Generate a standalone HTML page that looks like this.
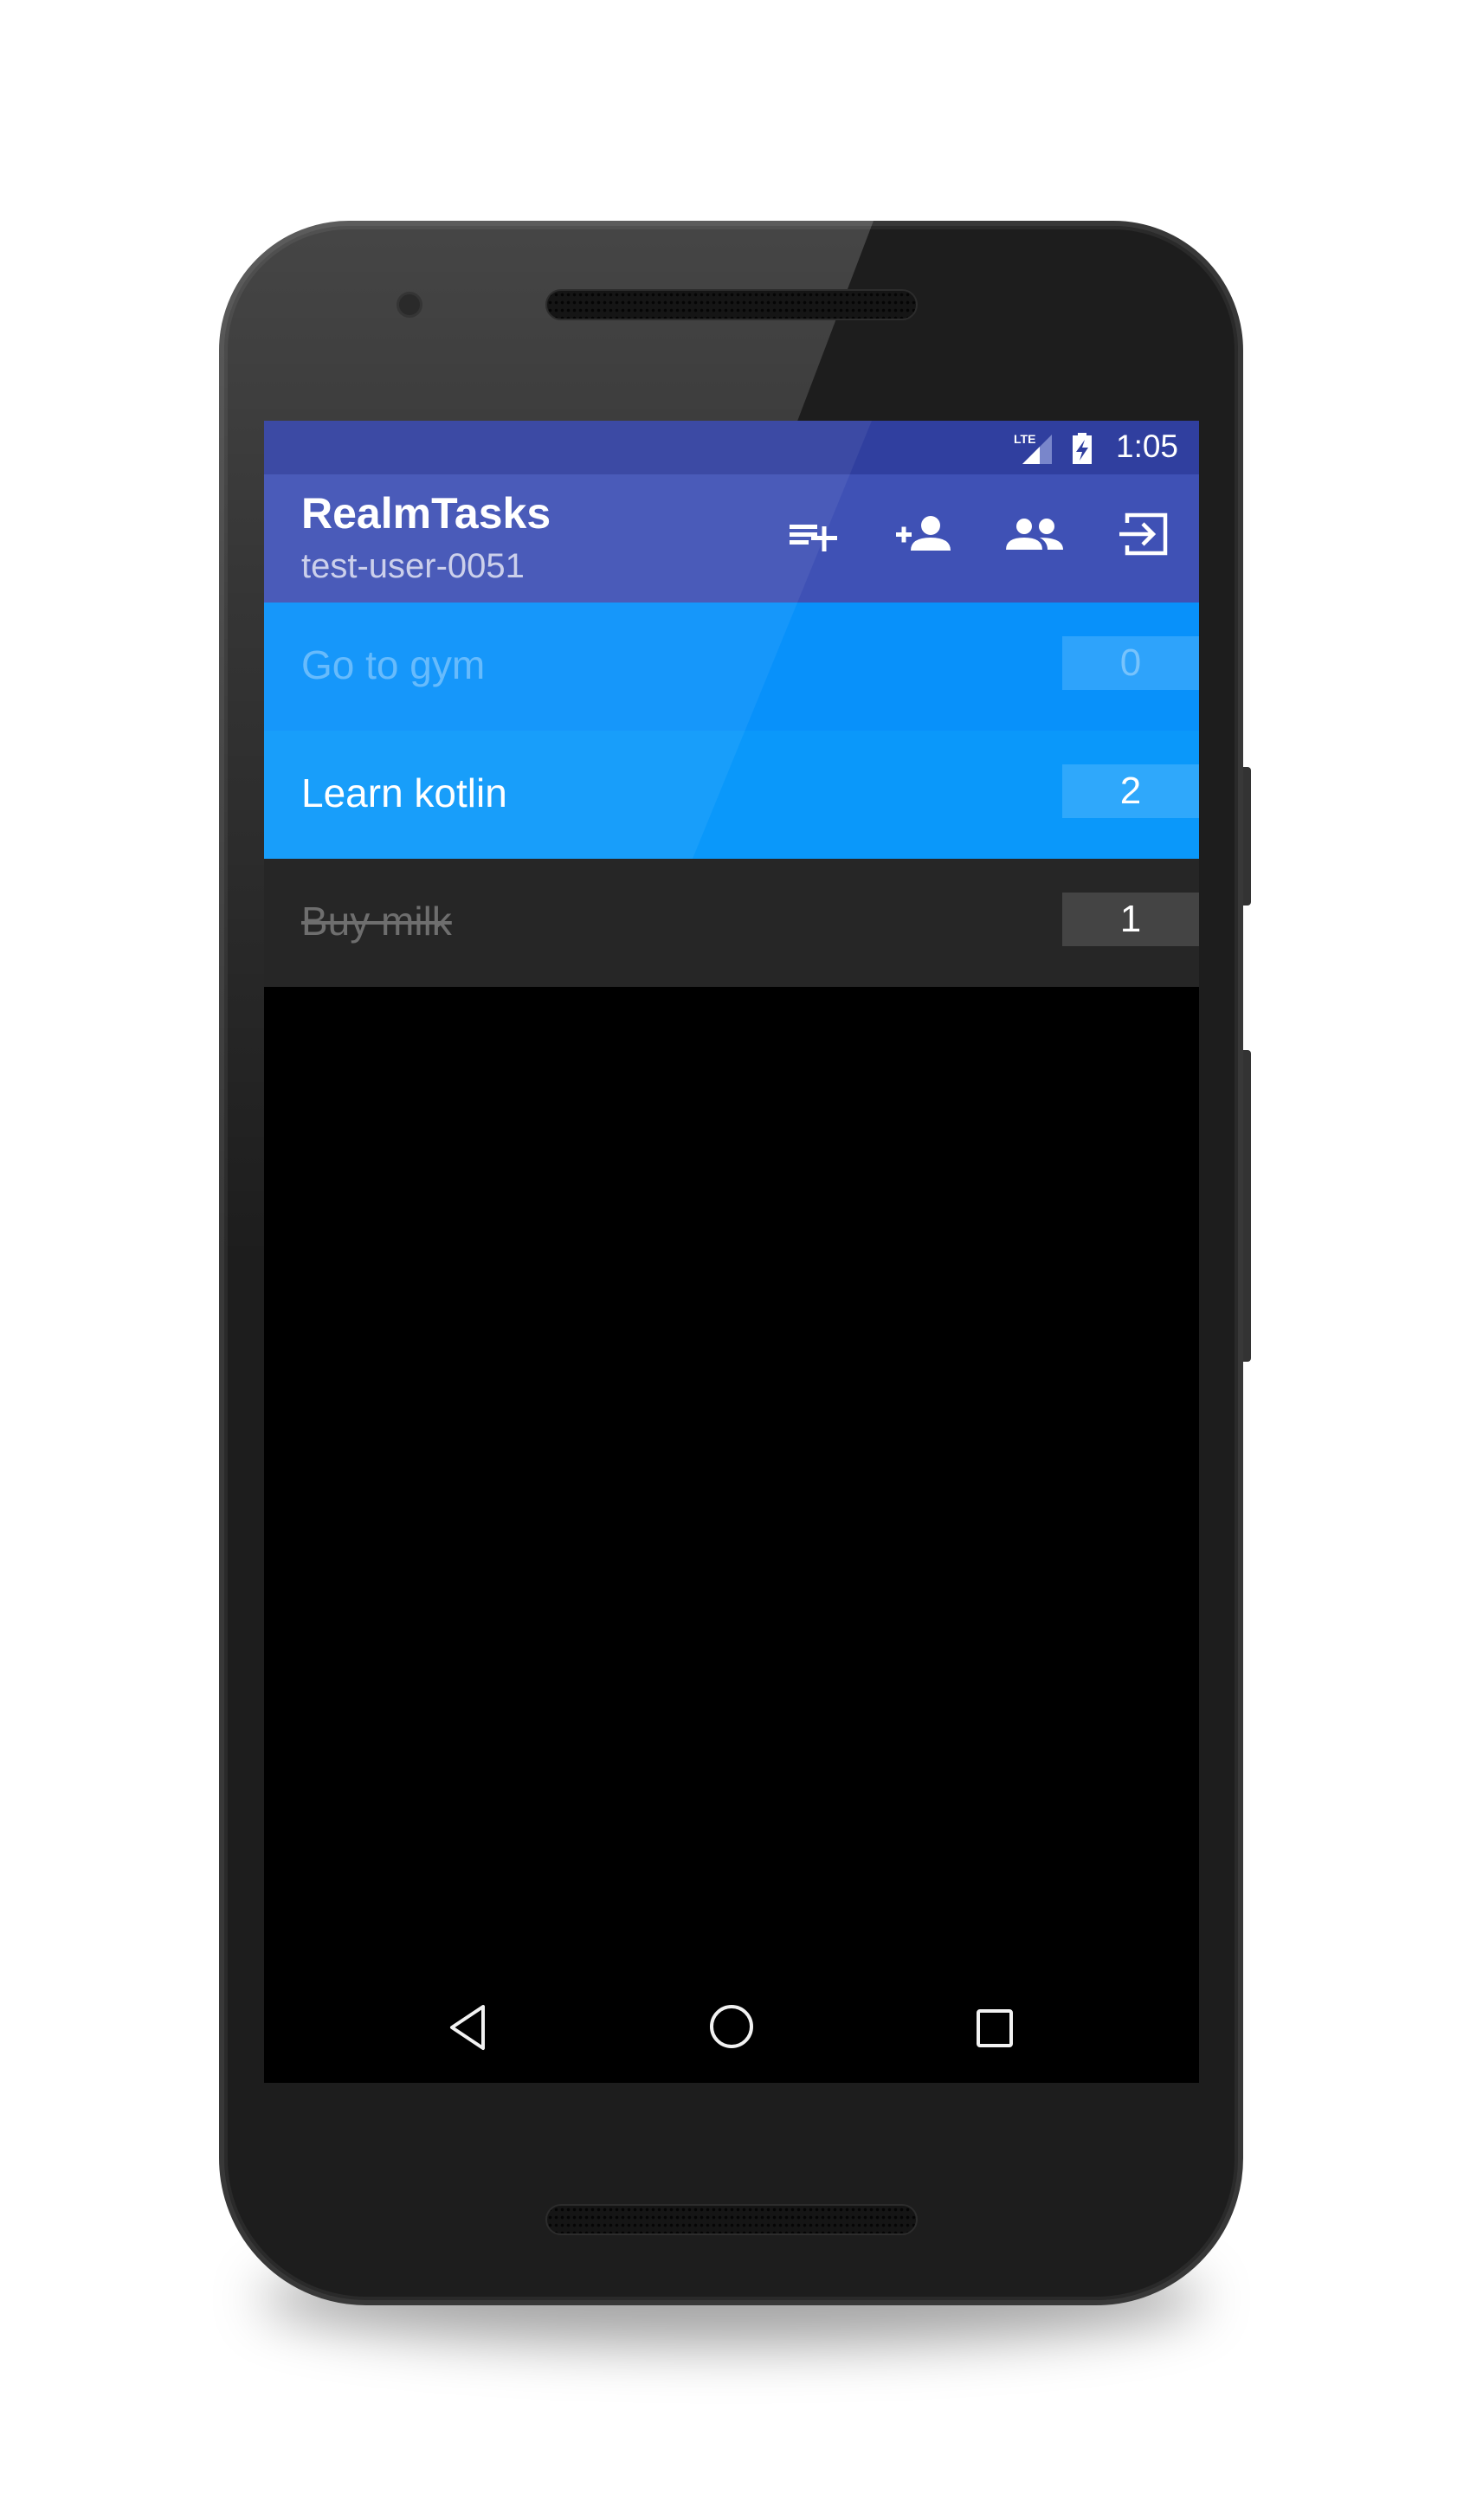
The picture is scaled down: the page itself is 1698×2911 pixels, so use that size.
<!DOCTYPE html>
<html><head><meta charset="utf-8"><style>
*{margin:0;padding:0;box-sizing:border-box}
body{width:1698px;height:2911px;background:#fff;position:relative;overflow:hidden;font-family:"Liberation Sans",Roboto,sans-serif}
.abs{position:absolute}
#shadow{left:300px;top:2600px;width:1090px;height:110px;border-radius:50%;background:rgba(0,0,0,0.35);filter:blur(30px)}
#phone{left:253px;top:255px;width:1183px;height:2408px;border-radius:150px 150px 170px 170px;background:#1d1d1d;border:6px solid #383838;box-shadow:inset 0 0 0 4px #2a2a2a}
#gloss{left:253px;top:255px;width:1183px;height:2408px;border-radius:150px;overflow:hidden;pointer-events:none}
#btn1{left:1433px;top:886px;width:12px;height:160px;background:#333;border-radius:0 4px 4px 0}
#btn2{left:1433px;top:1213px;width:12px;height:360px;background:#333;border-radius:0 4px 4px 0}
.spk{width:430px;height:36px;border-radius:18px;background:#151515;border:2px solid #2c2c2c;
background-image:radial-gradient(circle,#050505 1.5px,transparent 2px);background-size:7px 9px}
#screen{left:305px;top:486px;width:1080px;height:1920px;background:#000;overflow:hidden}
#sb{left:0;top:0;width:1080px;height:62px;background:#303F9F}
#tb{left:0;top:62px;width:1080px;height:148px;background:#3F51B5}
.row{left:0;width:1080px;height:148px}
.row .t{position:absolute;left:43px;top:45px;font-size:46px;color:#fff}
.row .c{position:absolute;right:0;top:39px;width:158px;height:62px;font-size:44px;color:#fff;text-align:center;line-height:62px}
</style></head><body>
<div class="abs" id="shadow"></div>
<div class="abs" id="btn1"></div><div class="abs" id="btn2"></div>
<div class="abs" id="phone"></div>
<div class="abs" id="gloss"><div style="position:absolute;left:0;top:0;width:1183px;height:1200px;background:linear-gradient(180deg,rgba(255,255,255,0.18),rgba(255,255,255,0.11) 35%,rgba(255,255,255,0) 100%);clip-path:polygon(0 0,756px 0,300px 1200px,0 1200px)"></div></div>
<div class="abs spk" style="left:630px;top:334px"></div>
<div class="abs" style="left:458px;top:337px;width:30px;height:30px;border-radius:50%;background:#2a2a2a;border:3px solid #353535"></div>
<div class="abs spk" style="left:630px;top:2546px"></div>

<div class="abs" id="screen">
 <div class="abs" id="sb">
  <svg class="abs" style="left:866px;top:12px" width="140" height="40" viewBox="0 0 140 40">
   <text x="0" y="14" font-size="14" font-weight="bold" fill="#fff" font-family="Liberation Sans">LTE</text>
   <polygon points="10,38 44,4 44,38" fill="#7986CB"/>
   <polygon points="10,38 30,18 30,38" fill="#fff"/>
   <rect x="68" y="5" width="22" height="33" fill="#fff"/><rect x="74" y="2" width="10" height="4" fill="#fff"/>
   <polygon points="82,10 72,24 79,24 76,34 86,19 79,19" fill="#303F9F"/>
  </svg>
  <div class="abs" style="left:984px;top:9px;font-size:37px;color:#fff">1:05</div>
 </div>
 <div class="abs" id="tb">
  <div class="abs" style="left:43px;top:16px;font-size:50px;font-weight:bold;color:#fff">RealmTasks</div>
  <div class="abs" style="left:43px;top:84px;font-size:40px;color:rgba(255,255,255,0.72)">test-user-0051</div>
  <svg class="abs" style="left:607px;top:34px" width="460" height="60" viewBox="0 0 460 60">
   <g fill="#fff" transform="translate(-12,0)">
    <rect x="12" y="24" width="32" height="5"/><rect x="12" y="33" width="32" height="5"/><rect x="12" y="42" width="22" height="5"/>
    <rect x="37" y="37" width="30" height="5"/><rect x="49.5" y="26" width="5" height="29"/>
   </g>
   <g fill="#fff" transform="translate(-15,0)">
    <rect x="138" y="33" width="18" height="5"/><rect x="144.5" y="26.5" width="5" height="18"/>
    <circle cx="178" cy="25" r="11"/><path d="M155 54 Q155 39 178 39 Q201 39 201 54 Z"/>
   </g>
   <g fill="#fff" transform="translate(6,0)">
    <circle cx="265" cy="26" r="9"/><circle cx="291" cy="26" r="9"/>
    <path d="M244 53 Q244 39 265 39 Q286 39 286 53Z"/><path d="M283 39 Q310 39 310 53 L292 53 Q292 44 283 39Z"/>
   </g>
   <g fill="none" stroke="#fff" stroke-width="4.5" transform="translate(-6,-2)">
    <path d="M396 24 V15 H440 V59 H396 V50"/><path d="M387 37 H426 M414 25 L426 37 L414 49"/>
   </g>
  </svg>
 </div>
 <div class="abs row" style="top:210px;background:#0891FA"><div class="t" style="color:rgba(255,255,255,0.35)">Go to gym</div><div class="c" style="background:#2EA3FB;color:rgba(255,255,255,0.35)">0</div></div>
 <div class="abs row" style="top:358px;background:#0A98FA"><div class="t">Learn kotlin</div><div class="c" style="background:#2FA8FB">2</div></div>
 <div class="abs row" style="top:506px;background:#262626"><div class="t" style="color:#6e6e6e;text-decoration:line-through">Buy milk</div><div class="c" style="background:#444">1</div></div>
 <div class="abs" style="left:0;top:0;width:1080px;height:506px;background:rgba(255,255,255,0.06);clip-path:polygon(0 0,702px 0,495px 506px,0 506px)"></div>
 <svg class="abs" style="left:0;top:1810px" width="1080" height="90" viewBox="0 0 1080 90">
  <g fill="none" stroke="#f2f2f2" stroke-width="4">
   <path d="M253 22 L217 46 L253 70 Z" stroke-linejoin="round"/>
   <circle cx="540" cy="45" r="23"/>
   <rect x="825" y="27" width="38" height="40" rx="2"/>
  </g>
 </svg>
</div>
</body></html>
